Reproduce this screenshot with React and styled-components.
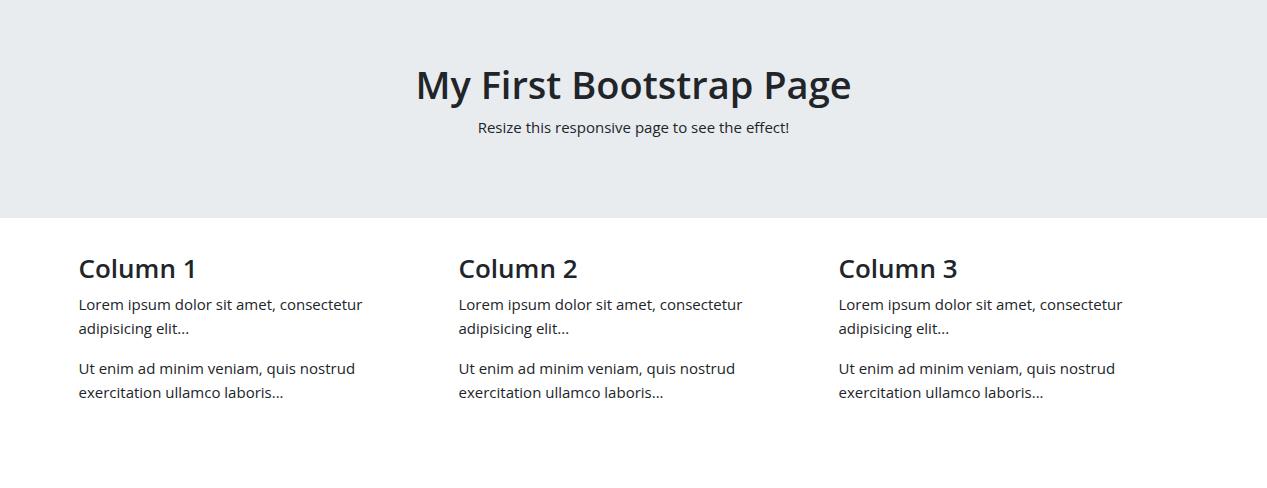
import styled, { createGlobalStyle } from 'styled-components';

const GlobalStyle = createGlobalStyle`
    * { box-sizing: border-box; }
    body {
        margin: 0;
        font-family: "Open Sans", "Noto Sans", Arial, sans-serif;
        font-size: 15px;
        line-height: 24px;
        color: #212529;
        background: #fff;
    }
`

const Jumbotron = styled.div`
    background-color: #e9ecef;
    height: 218px;
    padding: 60px 32px 0;
    margin-bottom: 32px;
    text-align: center;
    h1 {
        margin: 0 0 7px;
        font-size: 38px;
        font-weight: 600;
        line-height: 48px;
    }
    p {
        margin: 0;
        font-size: 15px;
    }
`

const Container = styled.div`
    max-width: 1140px;
    margin: 0 auto;
    padding: 0 15px;
`

const Row = styled.div`
    display: grid;
    grid-template-columns: repeat(3, 1fr);
    margin: 0 -15px;
`

const Column = styled.div`
    padding: 0 15px;
    h3 {
        margin: 0 0 8px;
        padding-top: 2px;
        font-size: 26px;
        font-weight: 600;
        line-height: 32px;
    }
    p {
        margin: 0 0 16px;
    }
`

const columns = ['Column 1', 'Column 2', 'Column 3'];

export default function App() {
    return (
        <>
            <GlobalStyle />
            <Jumbotron>
                <h1>My First Bootstrap Page</h1>
                <p>Resize this responsive page to see the effect!</p>
            </Jumbotron>
            <Container>
                <Row>
                    {columns.map((title) => (
                        <Column key={title}>
                            <h3>{title}</h3>
                            <p>Lorem ipsum dolor sit amet, consectetur adipisicing elit...</p>
                            <p>Ut enim ad minim veniam, quis nostrud exercitation ullamco laboris...</p>
                        </Column>
                    ))}
                </Row>
            </Container>
        </>
    );
}
